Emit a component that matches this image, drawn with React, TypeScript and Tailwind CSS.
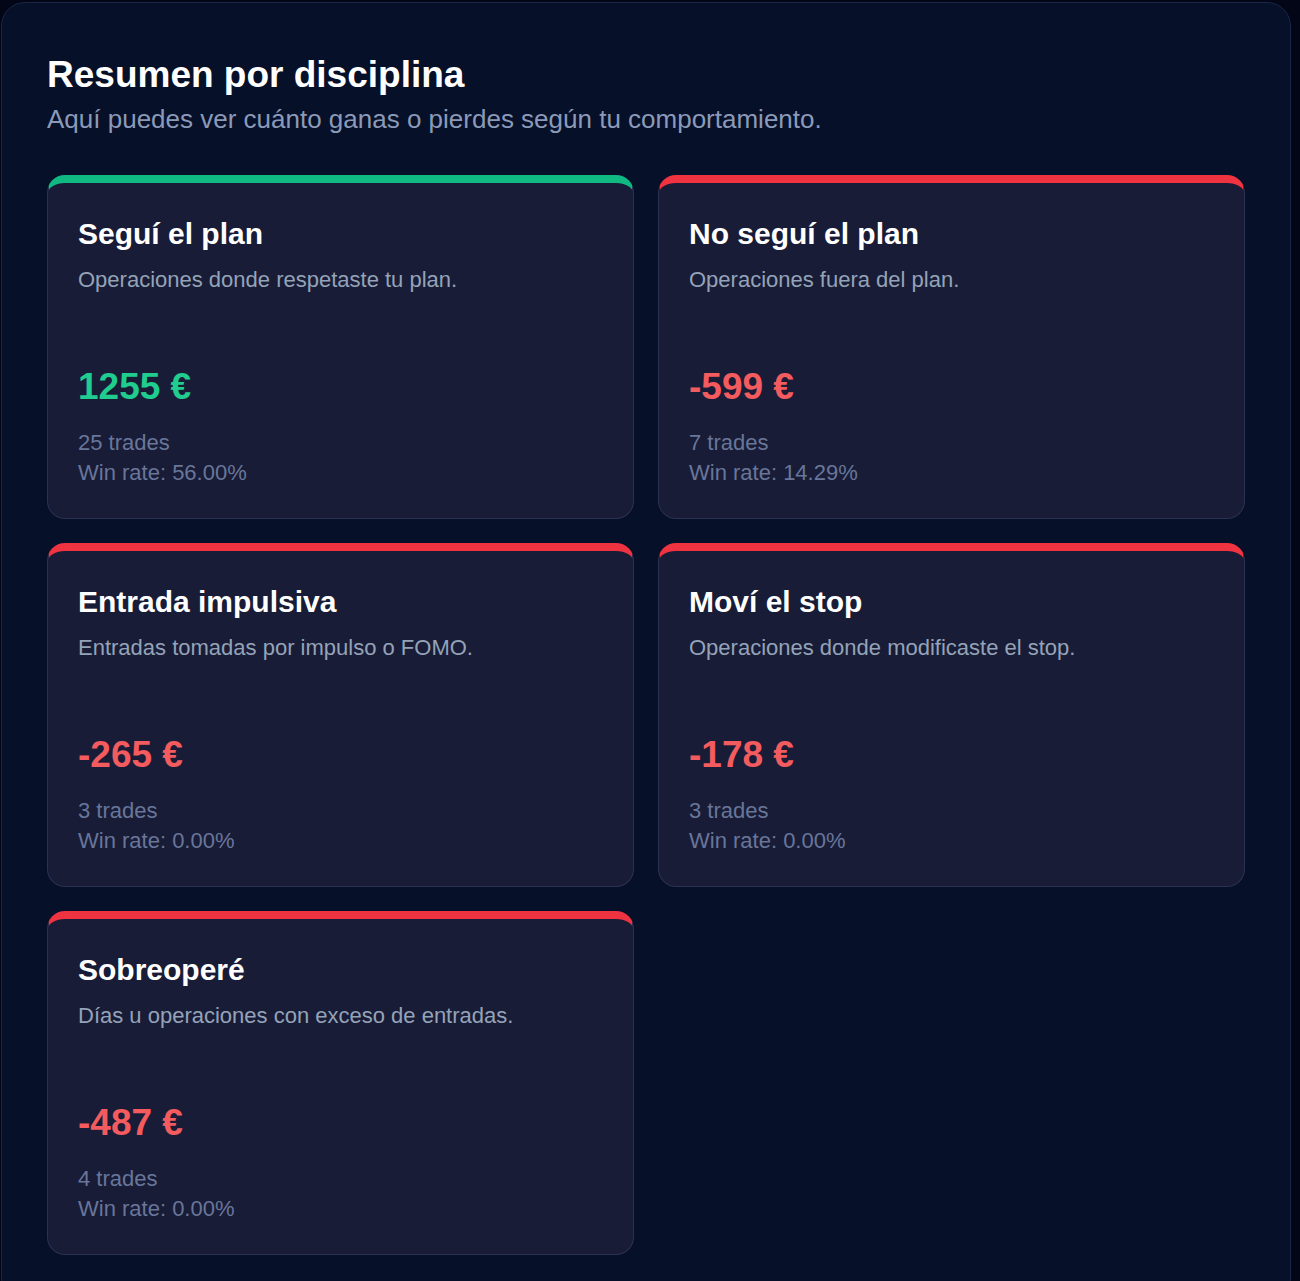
import React from "react";

type Item = { title: string; desc: string; value: string; trades: string; win: string; positive: boolean };

const items: Item[] = [
  { title: "Seguí el plan", desc: "Operaciones donde respetaste tu plan.", value: "1255 €", trades: "25 trades", win: "Win rate: 56.00%", positive: true },
  { title: "No seguí el plan", desc: "Operaciones fuera del plan.", value: "-599 €", trades: "7 trades", win: "Win rate: 14.29%", positive: false },
  { title: "Entrada impulsiva", desc: "Entradas tomadas por impulso o FOMO.", value: "-265 €", trades: "3 trades", win: "Win rate: 0.00%", positive: false },
  { title: "Moví el stop", desc: "Operaciones donde modificaste el stop.", value: "-178 €", trades: "3 trades", win: "Win rate: 0.00%", positive: false },
  { title: "Sobreoperé", desc: "Días u operaciones con exceso de entradas.", value: "-487 €", trades: "4 trades", win: "Win rate: 0.00%", positive: false },
];

function Card({ it }: { it: Item }) {
  return (
    <div
      className={
        "rounded-[18px] border border-[#2a3152] border-t-[8px] bg-[#181c36] px-[30px] pt-[33px] pb-[30px] " +
        (it.positive ? "border-t-[#10b981]" : "border-t-[#ef3340]")
      }
    >
      <div className="text-[30px] leading-[36px] font-bold text-white">{it.title}</div>
      <div className="mt-[13px] text-[22px] leading-[30px] text-[#94a3b8]">{it.desc}</div>
      <div
        className={
          "mt-[70px] text-[37px] leading-[44px] font-bold " + (it.positive ? "text-[#20cc8e]" : "text-[#f35b5f]")
        }
      >
        {it.value}
      </div>
      <div className="mt-[19px] text-[22px] leading-[30px] text-[#68769a]">{it.trades}</div>
      <div className="text-[22px] leading-[30px] text-[#68769a]">{it.win}</div>
    </div>
  );
}

export default function App() {
  return (
    <div className="min-h-[1281px] bg-[#020617] pt-[2px] pl-[1px] pr-[9px]" style={{ fontFamily: '"Liberation Sans", Arial, sans-serif' }}>
      <div className="rounded-[24px] border border-[#1a2646] bg-[#071029] px-[45px] pt-[50px] pb-[46px]">
        <h1 className="text-[37px] leading-[44px] font-bold text-white">Resumen por disciplina</h1>
        <p className="mt-[5px] text-[26px] leading-[34px] text-[#8b9ab8]">
          Aquí puedes ver cuánto ganas o pierdes según tu comportamiento.
        </p>
        <div className="mt-[39px] grid grid-cols-2 gap-[24px] w-[1198px]">
          {items.map((it) => (
            <Card key={it.title} it={it} />
          ))}
        </div>
      </div>
    </div>
  );
}
